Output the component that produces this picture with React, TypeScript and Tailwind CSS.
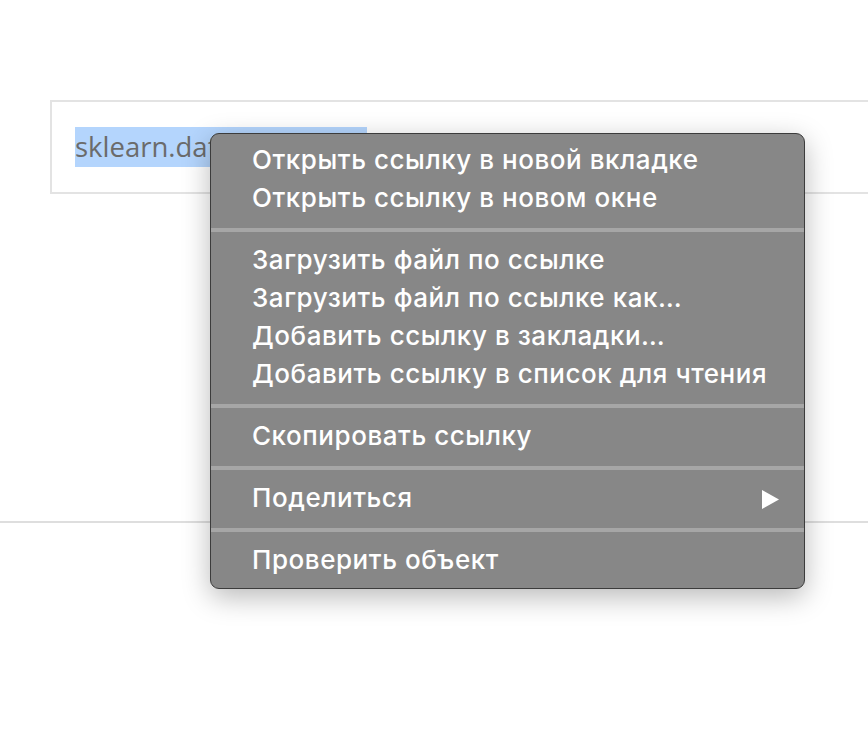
import React from 'react';

type Entry = { label: string; submenu?: boolean } | 'sep';

const entries: Entry[] = [
  { label: 'Открыть ссылку в новой вкладке' },
  { label: 'Открыть ссылку в новом окне' },
  'sep',
  { label: 'Загрузить файл по ссылке' },
  { label: 'Загрузить файл по ссылке как…' },
  { label: 'Добавить ссылку в закладки…' },
  { label: 'Добавить ссылку в список для чтения' },
  'sep',
  { label: 'Скопировать ссылку' },
  'sep',
  { label: 'Поделиться', submenu: true },
  'sep',
  { label: 'Проверить объект' },
];

export default function App() {
  return (
    <div className="relative w-[868px] h-[738px] overflow-hidden bg-white">
      {/* Link field */}
      <div className="pt-[100px]">
        <div className="ml-[50px] w-[900px] h-[94px] border-2 border-r-0 border-[#e3e3e3] flex items-center pl-[23px]">
          <span
            className="inline-block w-[292px] h-[40px] leading-[40px] bg-[#b4d5fd] text-[#6b6b6b] text-[27.5px] overflow-hidden whitespace-nowrap"
            style={{ fontFamily: '"Open Sans", sans-serif' }}
          >
            sklearn.datasets
          </span>
        </div>
      </div>

      <div className="mt-[327px] h-[2px] w-full bg-[#dedede]" />

      {/* Context menu */}
      <div
        className="absolute left-[210px] top-[133px] w-[595px] rounded-[9px] border border-[#3c3c3c] bg-[#878787] py-[8px] shadow-[0_8px_28px_rgba(0,0,0,0.28)]"
        style={{ fontFamily: 'Inter, "Noto Sans", sans-serif' }}
      >
        {entries.map((e, i) =>
          e === 'sep' ? (
            <div key={i} className="h-[24px] flex items-center">
              <div className="h-[4px] w-full bg-[#a6a6a6]" />
            </div>
          ) : (
            <div key={i} className="h-[38px] flex items-center justify-between pl-[41px] pr-[26px] text-white text-[26px] font-medium tracking-[0.55px]">
              <span className="leading-[30px] -mt-[3px]">{e.label}</span>
              {e.submenu && (
                <svg width="17" height="19" viewBox="0 0 17 19" className="mr-[-1px]">
                  <path d="M0 0 L17 9.5 L0 19 Z" fill="white" />
                </svg>
              )}
            </div>
          )
        )}
      </div>
    </div>
  );
}
